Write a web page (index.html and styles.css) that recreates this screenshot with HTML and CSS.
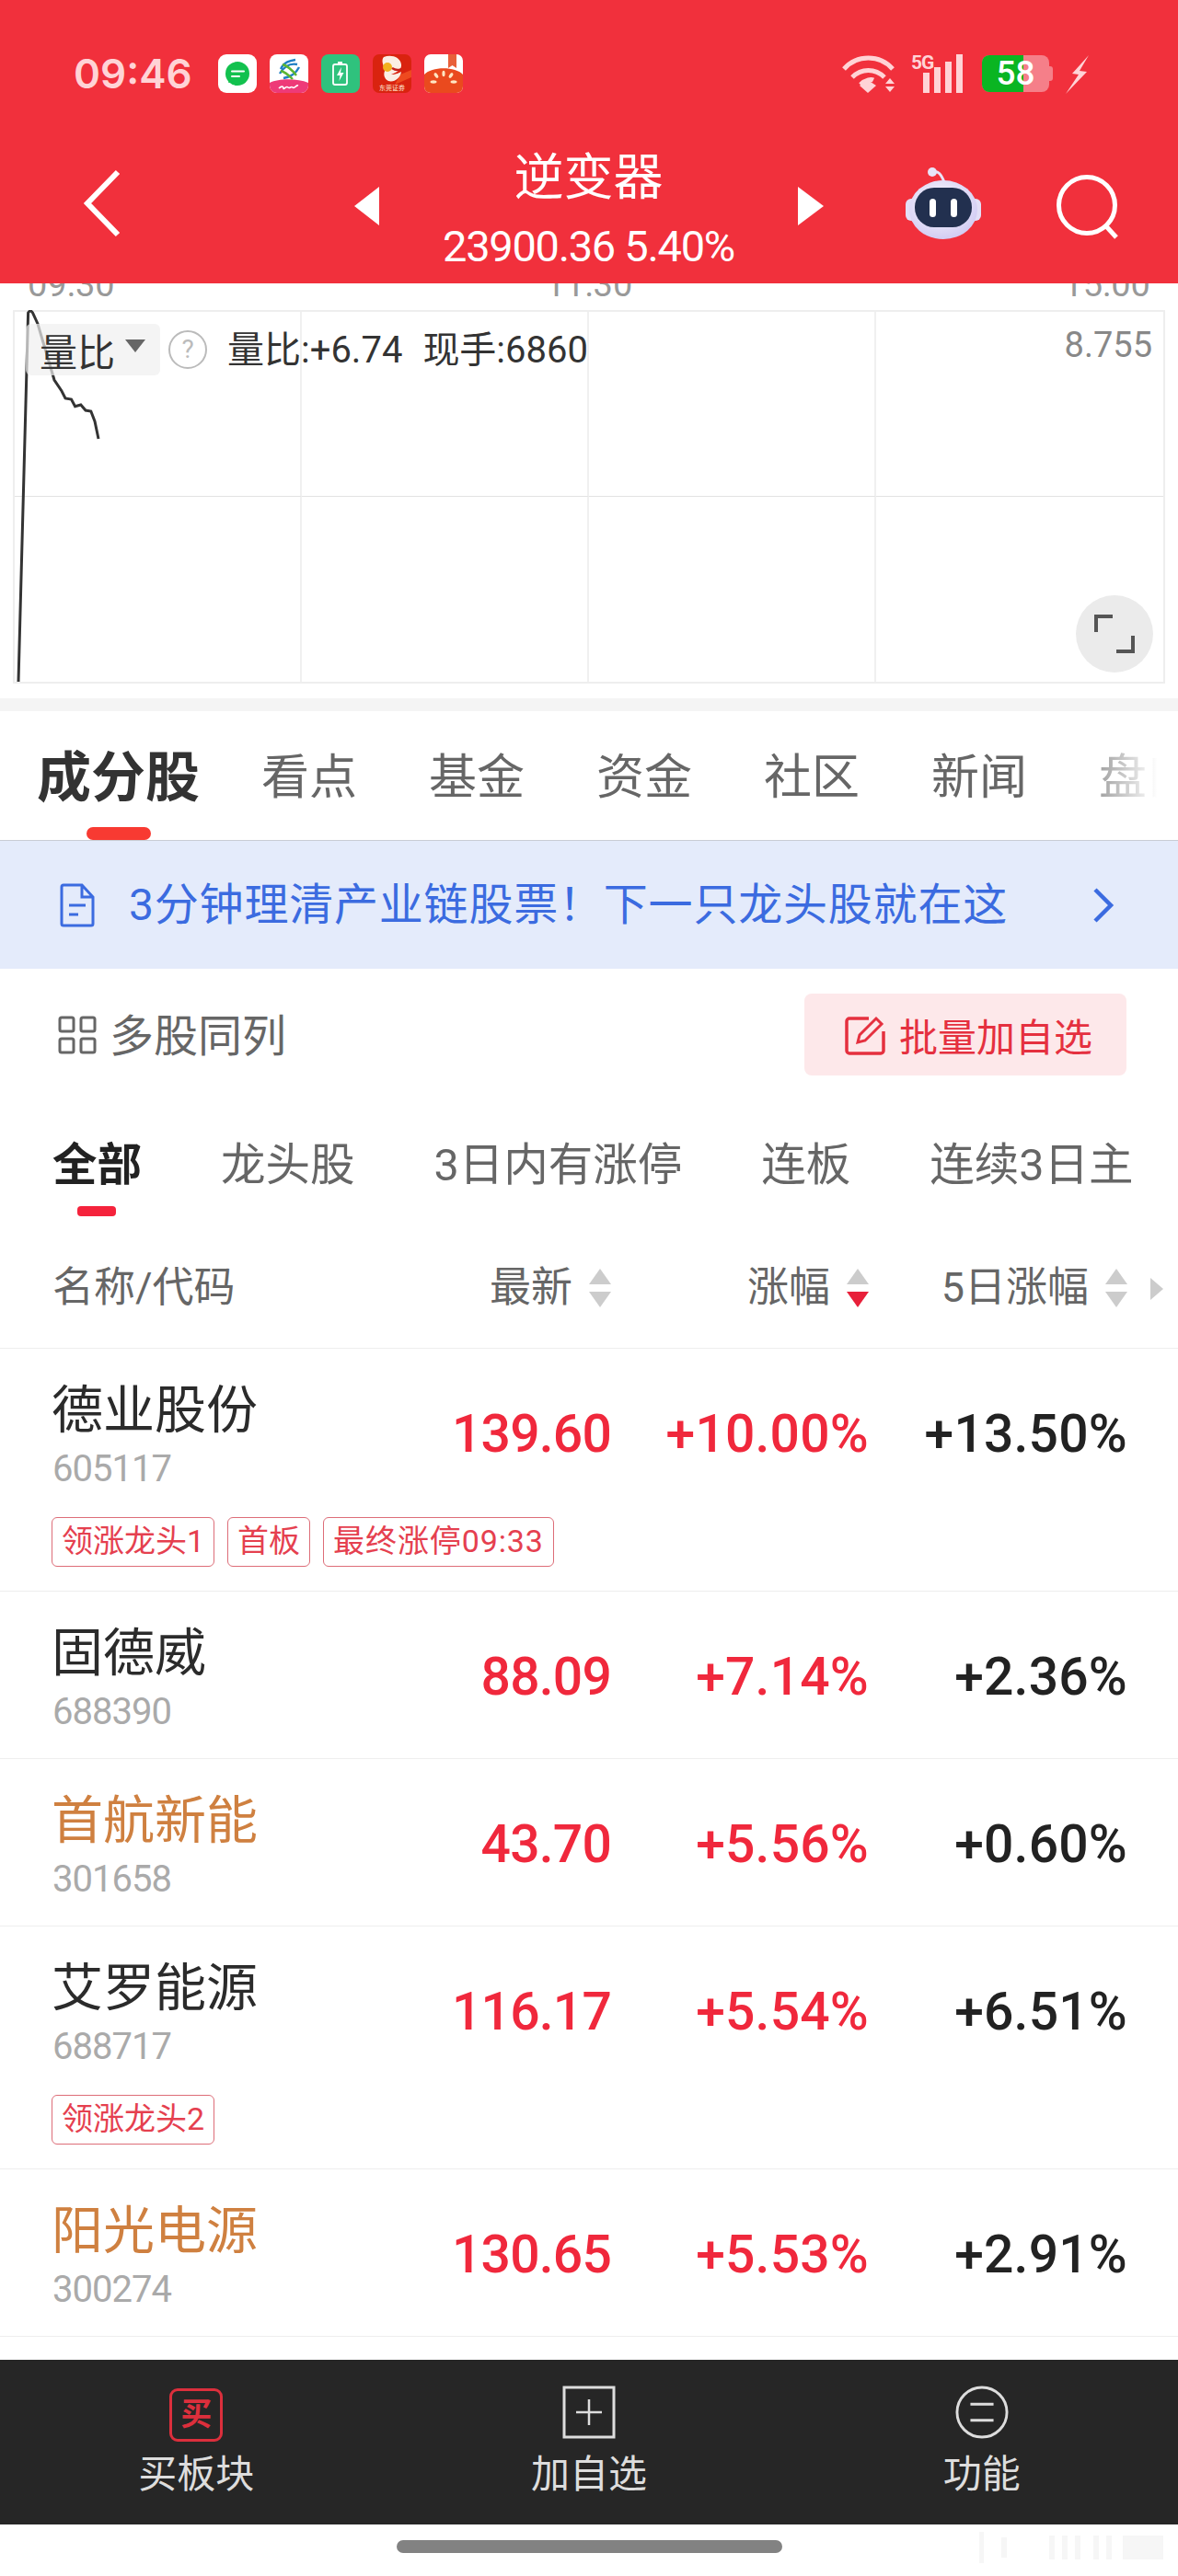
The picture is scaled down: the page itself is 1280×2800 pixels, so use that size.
FILE: index.html
```html
<!DOCTYPE html>
<html lang="zh-CN">
<head>
<meta charset="utf-8">
<title>逆变器</title>
<link rel="stylesheet" href="styles.css">
</head>
<body>
<div class="page">
  <header class="header">
    <div class="status">
      <span class="clock">09:46</span>
      <div class="apps">
        <svg class="app" viewBox="0 0 42 42"><rect width="42" height="42" rx="9" fill="#fff"/><circle cx="21" cy="21" r="13" fill="#12c14e"/><path d="M11 31l2-6 5 4z" fill="#12c14e"/><path d="M15 18.500h13M15 24h8" stroke="#fff" stroke-width="2" stroke-linecap="round"/></svg>
        <svg class="app" viewBox="0 0 42 42"><rect width="42" height="42" rx="8" fill="#fff"/><path d="M0 31c10-5 30-5 42 0v3a8 8 0 0 1-8 8H8a8 8 0 0 1-8-8z" fill="#ee3a78"/><path d="M12 16c4-8 10-9 16-10M11 21c6-10 14-11 19-10M15 26c6-1 13-4 17-12" fill="none" stroke="#1f7fc4" stroke-width="2.400"/><path d="M14 11c6 2 12 8 15 12M12 18c5 1 10 6 13 9" fill="none" stroke="#5cb531" stroke-width="2.400"/><path d="M10 37c3-3 5-2 5 0s3-3 5-1 3-2 5 0 4-3 6-2" fill="none" stroke="#fff" stroke-width="1.600"/></svg>
        <svg class="app" viewBox="0 0 42 42"><rect width="42" height="42" rx="8" fill="#2fc27d"/><rect x="13" y="11" width="15" height="22" rx="2" fill="none" stroke="#fff" stroke-width="1.800"/><rect x="18" y="8" width="5" height="3" fill="#fff"/><path d="M22 14l-5 9h3.500l-1 6 5-9h-3.500z" fill="#fff"/></svg>
        <svg class="app" viewBox="0 0 42 42"><rect width="42" height="42" rx="7" fill="#d9230f"/><path d="M30 22l12-5v8l-18 8z" fill="#ee4a1f"/><path d="M12 3c8-3 18 0 19 8 1 6-6 9-11 11 6 0 8-2 11-3-1 7-8 12-14 10-5-2-6-9-3-12-3-5-5-11-2-14z" fill="#fbeee4"/><circle cx="16" cy="14" r="5" fill="#f2b01e"/><path d="M21 15c3 2 6 3 10 1" fill="none" stroke="#c4201a" stroke-width="2.500"/><text x="21" y="39" class="app-mini">东莞证券</text></svg>
        <svg class="app" viewBox="0 0 42 42"><rect width="42" height="42" rx="7" fill="#fff"/><path d="M0 22c8-9 34-9 42 0v13a7 7 0 0 1-7 7H7a7 7 0 0 1-7-7z" fill="#ea4a1e"/><path d="M26 0h9v15l-4.500-3-4.500 3z" fill="#e8603a"/><ellipse cx="21" cy="21" rx="1.600" ry="3.200" fill="#ffe6c2"/><ellipse cx="13" cy="23" rx="1.700" ry="3.200" transform="rotate(-35 13 23)" fill="#ffe6c2"/><ellipse cx="29" cy="23" rx="1.700" ry="3.200" transform="rotate(35 29 23)" fill="#ffe6c2"/><ellipse cx="10" cy="30" rx="3.500" ry="1.700" fill="#ffe6c2"/><ellipse cx="32" cy="30" rx="3.500" ry="1.700" fill="#ffe6c2"/></svg>
      </div>
      <div class="sys">
        <svg class="wifi" viewBox="0 0 58 42"><path d="M2 16C16 0 41 0 55 16" fill="none" stroke="#ffd3d6" stroke-width="5"/><path d="M11 25c10-10 25-10 35 0" fill="none" stroke="#ffd3d6" stroke-width="5"/><path d="M20 33c6-6 12-6 14-5" fill="none" stroke="#ffd3d6" stroke-width="5"/><path d="M19 34l9-6 9 6-9 8z" fill="#ffd3d6"/><path d="M47 32l5-6 5 6zM47 35h10l-5 6z" fill="#ffd3d6"/></svg>
        <div class="signal">
          <span class="sig-5g">5G</span>
          <svg class="bars" viewBox="0 0 46 42"><path d="M3 20h7v22H3zM15 14h7v28h-7zM27 8h7v34h-7zM39 0h7v42h-7z" fill="#ffd3d6"/></svg>
        </div>
        <div class="battery">
          <span class="battery-fill"></span>
          <span class="battery-text">58</span>
        </div>
        <svg class="bolt" viewBox="0 0 25 42"><path d="M25 0L7 20l7 1L0 42l23-24-8-1z" fill="#ffd3d6"/></svg>
      </div>
    </div>
    <nav class="nav">
      <svg class="back" viewBox="0 0 42 74"><path d="M38 3L5 37l33 34" fill="none" stroke="#fff" stroke-width="6"/></svg>
      <span class="tri tri-left"></span>
      <div class="title">
        <div class="title-main">逆变器</div>
        <div class="title-sub">23900.36 5.40%</div>
      </div>
      <span class="tri tri-right"></span>
      <svg class="robot" viewBox="0 0 84 78">
        <defs><radialGradient id="rb" cx="45%" cy="40%" r="65%"><stop offset="0" stop-color="#fff"/><stop offset="1" stop-color="#cfc8f2"/></radialGradient></defs>
        <path d="M30 6c6-4 10 2 13 10" fill="none" stroke="#e8e3f8" stroke-width="3"/><circle cx="30" cy="5" r="5" fill="#e8e3f8"/>
        <rect x="1" y="34" width="82" height="24" rx="6" fill="#e3dff7"/>
        <ellipse cx="42" cy="46" rx="37" ry="32" fill="url(#rb)"/>
        <rect x="11" y="22" width="62" height="43" rx="21" fill="#22304f"/>
        <rect x="27" y="34" width="7" height="20" rx="3.500" fill="#fff"/><rect x="50" y="34" width="7" height="20" rx="3.500" fill="#fff"/>
      </svg>
      <svg class="search" viewBox="0 0 70 70"><circle cx="33" cy="33" r="30.500" fill="none" stroke="#fff" stroke-width="5"/><path d="M54 56l11 12" stroke="#fff" stroke-width="5"/></svg>
    </nav>
  </header>

  <section class="chart">
    <div class="axis"><span>09:30</span><span>11:30</span><span>15:00</span></div>
    <div class="plot">
      <div class="grid">
        <i></i><i></i><i></i><i></i><i></i><i></i><i></i><i></i>
      </div>
      <svg class="line" viewBox="14 337 1252 406"><path d="M20 741L30.600 340Q33 336 35.500 340L41 352L59 413L67 425L71 433L77.500 434L81.600 441.700L87.800 440L93 446L98.800 447L103 458L107 477" fill="none" stroke="#333" stroke-width="3"/></svg>
      <div class="tools">
        <div class="drop"><span>量比</span><i class="drop-tri"></i></div>
        <span class="help">?</span>
        <span class="readout"><span>量比:+6.74</span><span>现手:6860</span></span>
      </div>
      <span class="top-val">8.755</span>
      <div class="expand"><svg viewBox="0 0 44 44"><path d="M2 20V3h18M42 24v17H24" fill="none" stroke="#555" stroke-width="4"/></svg></div>
    </div>
  </section>
  <div class="band"></div>

  <div class="tabs">
    <div class="tab tab-on">成分股<i></i></div>
    <div class="tab">看点</div>
    <div class="tab">基金</div>
    <div class="tab">资金</div>
    <div class="tab">社区</div>
    <div class="tab">新闻</div>
    <div class="tab">盘口</div>
  </div>

  <div class="banner">
    <svg class="doc" viewBox="0 0 38 48"><path d="M4 2h20l12 13v29a2 2 0 0 1-2 2H4a2 2 0 0 1-2-2V4a2 2 0 0 1 2-2zM24 2v13h12M10 24h18M10 34h10" fill="none" stroke="#3b6be0" stroke-width="3"/></svg>
    <span class="banner-text">3分钟理清产业链股票！下一只龙头股就在这</span>
    <svg class="banner-go" viewBox="0 0 24 40"><path d="M3 3l17 17L3 37" fill="none" stroke="#3b6be0" stroke-width="4.500"/></svg>
  </div>

  <div class="toolbar">
    <div class="multi">
      <svg viewBox="0 0 42 42"><g fill="none" stroke="#666" stroke-width="3"><rect x="2" y="2" width="15" height="15" rx="2"/><rect x="25" y="2" width="15" height="15" rx="2"/><rect x="2" y="25" width="15" height="15" rx="2"/><rect x="25" y="25" width="15" height="15" rx="2"/></g></svg>
      <span class="multi-text">多股同列</span>
    </div>
    <div class="batch">
      <svg viewBox="0 0 44 44"><path d="M26 4H5a3 3 0 0 0-3 3v32a3 3 0 0 0 3 3h34a3 3 0 0 0 3-3V18" fill="none" stroke="#e5303f" stroke-width="3.500"/><path d="M14 30l2-8L34 4l6 6-18 18z" fill="none" stroke="#e5303f" stroke-width="3"/></svg>
      <span>批量加自选</span>
    </div>
  </div>

  <div class="subtabs">
    <div class="sub sub-on">全部<i></i></div>
    <div class="sub">龙头股</div>
    <div class="sub">3日内有涨停</div>
    <div class="sub">连板</div>
    <div class="sub">连续3日主</div>
  </div>

  <div class="thead">
    <div class="th-name">名称/代码</div>
    <div class="th">最新<span class="sort"><i class="up"></i><i class="down"></i></span></div>
    <div class="th">涨幅<span class="sort"><i class="up"></i><i class="down down-on"></i></span></div>
    <div class="th">5日涨幅<span class="sort"><i class="up"></i><i class="down"></i></span></div>
    <i class="more"></i>
  </div>

  <main class="list">
    <article class="row">
      <div class="cells">
        <div class="stock"><div class="name">德业股份</div><div class="code">605117</div></div>
        <div class="num red">139.60</div><div class="num pct red">+10.00%</div><div class="num pct">+13.50%</div>
      </div>
      <div class="tags"><span class="tag">领涨龙头1</span><span class="tag">首板</span><span class="tag tag-time">最终涨停09:33</span></div>
    </article>
    <article class="row">
      <div class="cells">
        <div class="stock"><div class="name">固德威</div><div class="code">688390</div></div>
        <div class="num red">88.09</div><div class="num pct red">+7.14%</div><div class="num pct">+2.36%</div>
      </div>
    </article>
    <article class="row">
      <div class="cells">
        <div class="stock"><div class="name orange">首航新能</div><div class="code">301658</div></div>
        <div class="num red">43.70</div><div class="num pct red">+5.56%</div><div class="num pct">+0.60%</div>
      </div>
    </article>
    <article class="row">
      <div class="cells">
        <div class="stock"><div class="name">艾罗能源</div><div class="code">688717</div></div>
        <div class="num red">116.17</div><div class="num pct red">+5.54%</div><div class="num pct">+6.51%</div>
      </div>
      <div class="tags"><span class="tag">领涨龙头2</span></div>
    </article>
    <article class="row">
      <div class="cells">
        <div class="stock"><div class="name orange">阳光电源</div><div class="code">300274</div></div>
        <div class="num red">130.65</div><div class="num pct red">+5.53%</div><div class="num pct">+2.91%</div>
      </div>
    </article>
  </main>

  <footer class="foot">
    <div class="foot-item">
      <span class="buy-icon">买</span>
      <span>买板块</span>
    </div>
    <div class="foot-item">
      <svg class="foot-svg" viewBox="0 0 58 58"><path d="M2 2h54v54H2z" fill="none" stroke="#ddd" stroke-width="3"/><path d="M29 15v28M15 29h28" stroke="#ddd" stroke-width="2.500"/></svg>
      <span>加自选</span>
    </div>
    <div class="foot-item">
      <svg class="foot-svg" viewBox="0 0 60 60"><circle cx="30" cy="30" r="28" fill="none" stroke="#ddd" stroke-width="3"/><path d="M17 21h26M17 39h26" stroke="#ddd" stroke-width="3"/></svg>
      <span>功能</span>
    </div>
  </footer>
  <div class="home"><span class="home-bar"></span>
    <svg class="mark" viewBox="0 0 210 42"><path d="M4 4h5v34H4zM28 10h6v22h-6zM80 8h6v26h-6zM94 8h6v26h-6zM108 8h6v26h-6zM128 8h6v26h-6zM142 8h6v26h-6zM160 8h44v26h-44z" fill="#f6f6f6"/></svg>
  </div>
</div>
</body>
</html>
```
FILE: styles.css
```css
* { box-sizing: border-box; }
html, body { margin: 0; padding: 0; background: #fff; }
body { font-family: Roboto, "Noto Sans CJK SC", sans-serif; color: #222; }
i { display: block; font-style: normal; }
svg { display: block; }
.page { width: 1280px; height: 2800px; overflow: hidden; display: flex; flex-direction: column; }

/* header */
.header { height: 308px; background: #f1303c; flex: none; }
.status { height: 160px; padding: 59px 97px 0 80px; display: flex; align-items: flex-start; }
.clock { font-family: Inter, sans-serif; font-weight: 600; font-size: 44px; line-height: 42px; color: #ffd3d6; width: 157px; }
.apps { display: flex; gap: 14px; }
.app { width: 42px; height: 42px; }
.app-mini { font-family: "Noto Sans CJK SC", sans-serif; font-size: 7px; fill: #ffe9d0; text-anchor: middle; }
.sys { margin-left: auto; display: flex; align-items: flex-start; }
.wifi { width: 58px; height: 42px; }
.signal { position: relative; width: 56px; height: 42px; margin-left: 17px; }
.sig-5g { position: absolute; left: 0; top: -2px; font-size: 21px; line-height: 22px; font-weight: 700; color: #ffd3d6; letter-spacing: -1px; }
.bars { position: absolute; right: 0; top: 0; width: 46px; height: 42px; }
.battery { position: relative; width: 73px; height: 40px; margin-left: 21px; margin-right: 4px; margin-top: 1px; border-radius: 8px; background: #f57f89; }
.battery::after { content: ""; position: absolute; right: -4px; top: 12px; width: 4px; height: 16px; border-radius: 0 3px 3px 0; background: #f57f89; }
.battery-fill { position: absolute; left: 0; top: 0; bottom: 0; width: 45px; border-radius: 8px 0 0 8px; background: #0ab522; }
.battery-text { position: relative; display: block; text-align: center; font-size: 37px; line-height: 40px; font-weight: 500; color: #fff; }
.bolt { width: 25px; height: 42px; margin-left: 14px; margin-top: 1px; }
.nav { position: relative; height: 148px; display: flex; align-items: flex-start; }
.back { width: 42px; height: 74px; margin: 24px 0 0 90px; }
.tri { width: 0; height: 0; border-style: solid; border-color: transparent; margin-top: 43px; }
.tri-left { border-width: 21px 27px 21px 0; border-right-color: #fff; margin-left: 253px; }
.tri-right { border-width: 21px 0 21px 28px; border-left-color: #fff; }
.title { width: 455px; text-align: center; color: #fff; }
.title-main { font-family: "Noto Sans CJK SC", sans-serif; font-size: 54px; line-height: 60px; margin-top: -1px; }
.title-sub { font-size: 47px; line-height: 42px; margin-top: 28px; letter-spacing: -1.3px; white-space: nowrap; }
.robot { width: 84px; height: 78px; margin: 22px 0 0 88px; }
.search { width: 70px; height: 70px; margin: 30px 0 0 81px; }

/* chart */
.chart { flex: none; height: 451px; padding-bottom: 16px; }
.axis { height: 29px; overflow: hidden; padding: 0 30px 8px; display: flex; justify-content: space-between; align-items: flex-end; font-size: 38px; line-height: 40px; color: #999; }
.plot { position: relative; width: 1252px; height: 406px; margin-left: 14px; }
.grid { height: 100%; display: grid; grid-template-columns: repeat(4, 1fr); grid-template-rows: repeat(2, 1fr); border: 2px solid #eee; }
.grid i { border-right: 2px solid #f0f0f0; border-bottom: 1px solid #e2e2e2; }
.grid i:nth-child(4n) { border-right: 0; }
.grid i:nth-child(n+5) { border-bottom: 0; }
.line { position: absolute; inset: 0; width: 1252px; height: 406px; }
.tools { position: absolute; left: 14px; top: 14px; display: flex; align-items: center; }
.drop { width: 146px; height: 56px; background: rgba(240,240,240,.7); border-radius: 6px; display: flex; align-items: center; padding-left: 15px; font-family: "Noto Sans CJK SC", sans-serif; font-size: 41px; color: #333; }
.drop-tri { width: 0; height: 0; margin-left: 11px; margin-top: -8px; border-style: solid; border-width: 14px 11px 0; border-color: #666 transparent transparent; }
.help { width: 42px; height: 42px; margin-left: 9px; border: 2.5px solid #bbb; border-radius: 50%; text-align: center; font-size: 28px; line-height: 37px; color: #bbb; }
.readout { margin-left: 22px; padding-top: 2px; display: flex; gap: 22px; font-size: 40px; line-height: 56px; color: #333; white-space: nowrap; }
.top-val { position: absolute; right: 14px; top: 16px; font-size: 38px; line-height: 44px; color: #888; }
.expand { position: absolute; right: 13px; top: 310px; width: 84px; height: 84px; border-radius: 50%; background: #ebebeb; padding: 20px; }
.band { flex: none; height: 14px; background: #f4f4f4; }

/* tabs */
.tabs { position: relative; flex: none; height: 141px; border-bottom: 1px solid #c9ccd4; display: flex; align-items: flex-start; padding: 33px 0 0 40px; gap: 78px; overflow: hidden; white-space: nowrap; }
.tabs::after { content: ""; position: absolute; right: 0; top: 0; bottom: 0; width: 90px; background: linear-gradient(to right, rgba(255,255,255,.35), #fff 75%); }
.tab { position: relative; flex: none; font-family: "Noto Sans CJK SC", sans-serif; font-size: 52px; line-height: 70px; color: #666; }
.tab-on { font-size: 59px; font-weight: 700; color: #333; width: 177px; margin-right: -11px; }
.tab-on i { position: absolute; left: 54px; top: 93px; width: 70px; height: 14px; border-radius: 7px; background: #f83a32; }

.banner { flex: none; height: 139px; background: #e4ebfb; display: flex; align-items: center; padding-left: 65px; }
.doc { width: 38px; height: 48px; }
.banner-text { margin-left: 37px; font-size: 48px; line-height: 60px; letter-spacing: .8px; color: #3b6be0; white-space: nowrap; }
.banner-go { width: 24px; height: 40px; margin-left: 92px; }

.toolbar { flex: none; height: 143px; padding: 27px 56px 27px 63px; display: flex; justify-content: space-between; align-items: center; }
.multi { display: flex; align-items: center; gap: 14px; font-size: 48px; color: #666; }
.multi svg { width: 42px; height: 42px; }
.multi-text { margin-top: -5px; }
.batch { width: 350px; height: 89px; border-radius: 8px; background: #fde8ea; display: flex; align-items: center; padding-left: 44px; gap: 15px; font-size: 42px; color: #e5303f; }
.batch svg { width: 44px; height: 44px; }

.subtabs { flex: none; height: 126px; padding: 41px 0 0 57px; display: flex; gap: 86px; white-space: nowrap; }
.sub { position: relative; font-size: 48.5px; line-height: 60px; color: #666; flex: none; }
.sub-on { font-weight: 700; color: #222; }
.sub-on i { position: absolute; left: 27px; top: 74px; width: 42px; height: 11px; border-radius: 4px; background: #f5233c; }

/* table */
.thead { position: relative; flex: none; height: 144px; padding: 48px 55px 0 57px; border-bottom: 1px solid #eee; display: grid; grid-template-columns: 317px 290px 280px 281px; grid-template-rows: 60px; font-size: 45px; line-height: 60px; color: #666; }
.th { display: flex; justify-content: flex-end; align-items: center; gap: 18px; }
.sort { display: flex; flex-direction: column; gap: 8px; }
.up { width: 0; height: 0; border-style: solid; border-width: 0 12px 17px; border-color: transparent transparent #ccc; }
.down { width: 0; height: 0; border-style: solid; border-width: 17px 12px 0; border-color: #ccc transparent transparent; }
.down-on { border-top-color: #e8203a; }
.more { position: absolute; right: 16px; top: 67px; width: 0; height: 0; border-style: solid; border-width: 12px 0 12px 14px; border-color: transparent transparent transparent #ccc; }

.list { flex: none; }
.row { border-bottom: 1px solid #eee; }
.cells { height: 181px; padding: 0 55px 0 57px; display: grid; grid-template-columns: 317px 290px 280px 281px; align-items: center; }
.stock { align-self: start; padding-top: 30px; margin-left: -1px; }
.name { font-family: "Noto Sans CJK SC", sans-serif; font-size: 56px; line-height: 64px; color: #2b2b2b; }
.orange { color: #cf8040; }
.code { margin-top: 15px; margin-left: 1px; font-size: 40px; line-height: 44px; letter-spacing: -1px; color: #aaa; }
.num { padding-top: 5px; text-align: right; font-size: 57px; line-height: 70px; font-weight: 500; letter-spacing: -.8px; color: #222; white-space: nowrap; }
.pct { letter-spacing: .2px; }
.red { color: #f0283c; }
.tags { display: flex; gap: 14px; padding: 2px 0 26px 56px; }
.tag { height: 54px; padding: 0 10px; border: 1.5px solid #dd6d78; border-radius: 6px; font-size: 34px; line-height: 50px; color: #e5404f; white-space: nowrap; }
.tag-time { letter-spacing: .9px; }

/* footer */
.foot { flex: none; margin-top: 25px; height: 179px; background: #262626; display: grid; grid-template-columns: repeat(3, 1fr); }
.foot-item { position: relative; height: 179px; display: flex; flex-direction: column; align-items: center; padding-top: 28px; font-size: 42px; line-height: 50px; color: #ddd; }
.foot-item > span:last-child { position: absolute; top: 100px; }
.foot-svg { width: 58px; height: 58px; }
.buy-icon { width: 58px; height: 58px; margin-top: 3px; border: 3.5px solid #dc2f3c; border-radius: 9px; text-align: center; font-size: 34px; font-weight: 700; line-height: 50px; color: #dc2f3c; }
.home { position: relative; flex: none; height: 56px; padding-top: 17px; display: flex; justify-content: center; }
.home-bar { width: 419px; height: 14px; border-radius: 7px; background: #828282; }
.mark { position: absolute; right: 10px; top: 4px; width: 210px; height: 42px; }
```
